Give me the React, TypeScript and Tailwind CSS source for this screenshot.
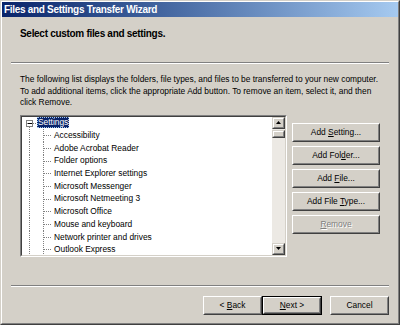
import React from 'react';

const items = [
  'Accessibility',
  'Adobe Acrobat Reader',
  'Folder options',
  'Internet Explorer settings',
  'Microsoft Messenger',
  'Microsoft Netmeeting 3',
  'Microsoft Office',
  'Mouse and keyboard',
  'Network printer and drives',
  'Outlook Express',
];

type BtnProps = {
  children: React.ReactNode;
  className?: string;
  isDefault?: boolean;
  disabled?: boolean;
};

const Btn = ({ children, className = '', isDefault = false, disabled = false }: BtnProps) => (
  <div className={`h-[19px] ${isDefault ? 'border border-black' : ''} ${className}`}>
    <div className="h-full border border-t-white border-l-white border-b-[#404040] border-r-[#404040]">
      <div
        className={`h-full flex items-center justify-center border border-t-[#d4d0c8] border-l-[#d4d0c8] border-b-[#808080] border-r-[#808080] text-[8.4px] ${
          disabled ? 'text-[#808080] [text-shadow:1px_1px_0_#fff]' : 'text-black'
        }`}
      >
        <span className="whitespace-pre leading-[11px]">{children}</span>
      </div>
    </div>
  </div>
);

const ChildLines = () => (
  <svg width="31" height="12.7" className="shrink-0">
    <line x1="7.5" y1="0" x2="7.5" y2="13" stroke="#808080" strokeDasharray="1 1" />
    <line x1="21.5" y1="0" x2="21.5" y2="13" stroke="#808080" strokeDasharray="1 1" />
    <line x1="22" y1="6.5" x2="30" y2="6.5" stroke="#808080" strokeDasharray="1 1" />
  </svg>
);

const RootLines = () => (
  <svg width="15" height="12.7" className="shrink-0">
    <rect x="4.5" y="3.5" width="6" height="6" fill="#fff" stroke="#808080" />
    <line x1="5.5" y1="6.5" x2="10" y2="6.5" stroke="#000" />
    <line x1="7.5" y1="10" x2="7.5" y2="13" stroke="#808080" strokeDasharray="1 1" />
    <line x1="11" y1="6.5" x2="14" y2="6.5" stroke="#808080" strokeDasharray="1 1" />
  </svg>
);

const Arrow = ({ up }: { up: boolean }) => (
  <div className="h-[12px] border border-t-[#d4d0c8] border-l-[#d4d0c8] border-b-[#404040] border-r-[#404040] bg-[#d4d0c8]">
    <div className="h-full flex items-center justify-center border border-t-white border-l-white border-b-[#808080] border-r-[#808080]">
      <svg width="5" height="3">
        {up ? <polygon points="2.5,0 5,3 0,3" fill="#000" /> : <polygon points="0,0 5,0 2.5,3" fill="#000" />}
      </svg>
    </div>
  </div>
);

const App: React.FC = () => {
  return (
    <div className="w-[400px] h-[325px] font-['Liberation_Sans',Arial,sans-serif] bg-[#d4d0c8] border border-t-[#d4d0c8] border-l-[#d4d0c8] border-b-[#404040] border-r-[#404040]">
      <div className="h-full flex flex-col border border-t-white border-l-white border-b-[#808080] border-r-[#808080]">
        {/* Title bar */}
        <div className="h-[15px] shrink-0 flex items-center pl-[2px] bg-gradient-to-r from-[#0a246a] to-[#a6caf0]">
          <span className="text-white font-bold text-[10px] tracking-[-0.3px] leading-none">
            Files and Settings Transfer Wizard
          </span>
        </div>

        {/* Header */}
        <div className="h-[45px] shrink-0 pl-[18px] pt-[11px]">
          <div className="font-bold text-[10px] tracking-[-0.3px] leading-[11px] text-black">
            Select custom files and settings.
          </div>
        </div>
        <div className="mx-[9px] shrink-0">
          <div className="h-px bg-[#808080]" />
          <div className="h-px bg-white" />
        </div>

        {/* Description */}
        <div className="pl-[18px] mt-[10px] text-[8.4px] leading-[11.5px] text-black">
          The following list displays the folders, file types, and files to be transferred to your new computer.
          <br />
          To add additional items, click the appropriate Add button. To remove an item, select it, and then
          <br />
          click Remove.
        </div>

        {/* Tree + buttons */}
        <div className="flex mt-[6px] pl-[18px]">
          <div className="w-[267px] h-[142px] border border-t-[#808080] border-l-[#808080] border-b-white border-r-white">
            <div className="h-full flex border border-t-[#404040] border-l-[#404040] border-b-[#d4d0c8] border-r-[#d4d0c8] bg-white">
              <div className="flex-1 text-[8.4px] text-black overflow-hidden">
                <div className="flex items-center h-[12.7px]">
                  <RootLines />
                  <span className="bg-[#0a246a] text-white leading-[11px] px-[1px] outline outline-1 outline-dotted outline-[#a6caf0] -outline-offset-1">
                    Settings
                  </span>
                </div>
                {items.map((it) => (
                  <div key={it} className="flex items-center h-[12.7px] whitespace-nowrap">
                    <ChildLines />
                    <span className="pl-[1px] leading-[11px]">{it}</span>
                  </div>
                ))}
              </div>
              <div className="w-[13px] flex flex-col bg-[#ece9e4]">
                <Arrow up />
                <div className="h-[8px] mt-px border border-t-[#d4d0c8] border-l-[#d4d0c8] border-b-[#404040] border-r-[#404040] bg-[#d4d0c8]">
                  <div className="h-full border border-t-white border-l-white border-b-[#808080] border-r-[#808080]" />
                </div>
                <div className="flex-1" />
                <Arrow up={false} />
              </div>
            </div>
          </div>

          <div className="ml-[5px] pt-[8px] flex flex-col gap-[4px] w-[88px]">
            <Btn>
              Add <u>S</u>etting...
            </Btn>
            <Btn>
              Add Fol<u>d</u>er...
            </Btn>
            <Btn>
              Add <u>F</u>ile...
            </Btn>
            <Btn>
              Add File <u>T</u>ype...
            </Btn>
            <Btn disabled>
              <u>R</u>emove
            </Btn>
          </div>
        </div>

        {/* Bottom separator */}
        <div className="mx-[9px] mt-[28px] shrink-0">
          <div className="h-px bg-[#808080]" />
          <div className="h-px bg-white" />
        </div>

        {/* Footer buttons */}
        <div className="flex mt-[9px] pl-[201px]">
          <Btn className="w-[59px]">
            &lt; <u>B</u>ack
          </Btn>
          <Btn className="w-[60px]" isDefault>
            <u>N</u>ext &gt;
          </Btn>
          <Btn className="w-[59px] ml-[8px]">Cancel</Btn>
        </div>
      </div>
    </div>
  );
};

export default App;
